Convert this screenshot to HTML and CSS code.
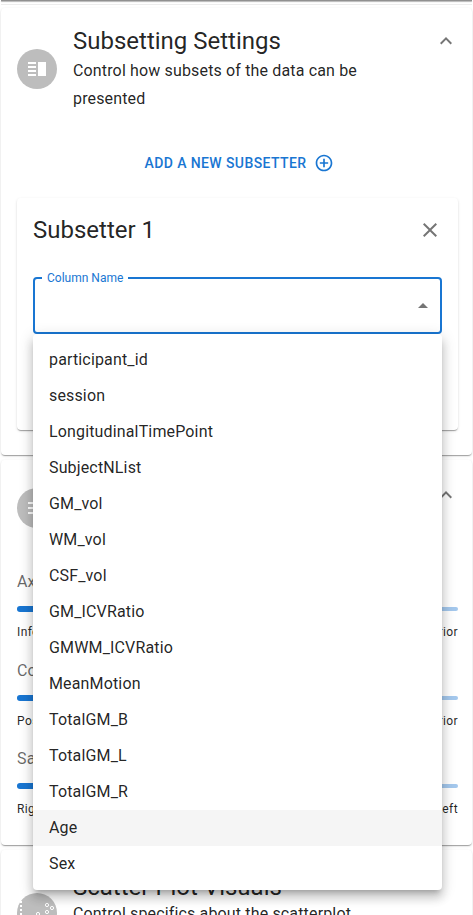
FILE: index.html
```html
<!DOCTYPE html>
<html lang="en">
<head>
<meta charset="utf-8">
<title>Settings</title>
<link rel="stylesheet" href="styles.css">
</head>
<body>
<div class="page">
  <div class="card stub"></div>

  <section class="card subsetting">
    <header class="card-head">
      <div class="avatar">
        <svg viewBox="0 0 24 24" class="avatar-icon"><path d="M3 5h8v2H3zM3 9h8v2H3zM3 13h8v2H3zM3 17h8v2H3zM13 5h8v14h-8z"/></svg>
      </div>
      <div class="head-text">
        <h2 class="title">Subsetting Settings</h2>
        <p class="sub">Control how subsets of the data can be presented</p>
      </div>
      <svg viewBox="0 0 24 24" class="chevron"><path d="M12 8l-6 6 1.41 1.41L12 10.83l4.59 4.58L18 14z"/></svg>
    </header>
    <div class="add-row">
      <span class="add-label">Add a new subsetter</span>
      <svg viewBox="0 0 24 24" class="add-icon"><path d="M13 7h-2v4H7v2h4v4h2v-4h4v-2h-4V7zm-1-5C6.48 2 2 6.48 2 12s4.48 10 10 10 10-4.48 10-10S17.52 2 12 2zm0 18c-4.41 0-8-3.59-8-8s3.59-8 8-8 8 3.59 8 8-3.59 8-8 8z"/></svg>
    </div>
    <div class="subsetter">
      <div class="subsetter-head">
        <h3 class="subsetter-title">Subsetter 1</h3>
        <svg viewBox="0 0 24 24" class="close"><path d="M19 6.41L17.59 5 12 10.59 6.41 5 5 6.41 10.59 12 5 17.59 6.41 19 12 13.41 17.59 19 19 17.59 13.41 12z"/></svg>
      </div>
      <div class="field">
        <span class="field-label">Column Name</span>
        <svg viewBox="0 0 24 24" class="caret"><path d="M7 14l5-5 5 5z"/></svg>
      </div>
    </div>
  </section>

  <section class="card planes">
    <header class="card-head">
      <div class="avatar">
        <svg viewBox="0 0 24 24" class="avatar-icon"><path d="M3 6h18v2H3zM3 11h18v2H3zM3 16h18v2H3z"/></svg>
      </div>
      <div class="head-text"></div>
      <svg viewBox="0 0 24 24" class="chevron"><path d="M12 8l-6 6 1.41 1.41L12 10.83l4.59 4.58L18 14z"/></svg>
    </header>
    <div class="slider-group">
      <div class="slider-name">Axial</div>
      <div class="slider"><div class="fill"></div></div>
      <div class="slider-ends"><span>Inferior</span><span>Superior</span></div>
    </div>
    <div class="slider-group">
      <div class="slider-name">Coronal</div>
      <div class="slider"><div class="fill"></div></div>
      <div class="slider-ends"><span>Posterior</span><span>Anterior</span></div>
    </div>
    <div class="slider-group">
      <div class="slider-name">Sagittal</div>
      <div class="slider"><div class="fill"></div></div>
      <div class="slider-ends"><span>Right</span><span>Left</span></div>
    </div>
  </section>

  <section class="card scatter">
    <header class="card-head">
      <div class="avatar">
        <svg viewBox="0 0 40 40" class="avatar-full"><path class="axis" d="M4 8v24"/><circle cx="30" cy="12" r="1.6"/><circle cx="35" cy="15" r="1.6"/><circle cx="30" cy="19" r="1.6"/><circle cx="21" cy="21" r="1.6"/><circle cx="27" cy="24" r="1.6"/><circle cx="15" cy="27" r="1.6"/></svg>
      </div>
      <div class="head-text">
        <h2 class="title">Scatter Plot Visuals</h2>
        <p class="sub">Control specifics about the scatterplot</p>
      </div>
    </header>
  </section>

  <ul class="menu">
    <li>participant_id</li>
    <li>session</li>
    <li>LongitudinalTimePoint</li>
    <li>SubjectNList</li>
    <li>GM_vol</li>
    <li>WM_vol</li>
    <li>CSF_vol</li>
    <li>GM_ICVRatio</li>
    <li>GMWM_ICVRatio</li>
    <li>MeanMotion</li>
    <li>TotalGM_B</li>
    <li>TotalGM_L</li>
    <li>TotalGM_R</li>
    <li class="hover">Age</li>
    <li>Sex</li>
  </ul>
</div>
</body>
</html>
```
FILE: styles.css
```css
* { box-sizing: border-box; }
html, body { margin: 0; padding: 0; height: 100%; overflow: hidden; }
body { background: #fff; font-family: Roboto, "Liberation Sans", sans-serif; color: rgba(0,0,0,0.87); }
.page { position: relative; width: 473px; height: 915px; overflow: hidden; padding: 0 1px; }
.card { position: relative; background: #fff; border-radius: 4px; box-shadow: 0 2px 1px -1px rgba(0,0,0,.2), 0 1px 1px 0 rgba(0,0,0,.14), 0 1px 3px 0 rgba(0,0,0,.12); margin-bottom: 5px; }
.stub { height: 1px; margin: 0 0 7px; background: #909090; border-radius: 0; box-shadow: 0 1px 1px #b0b0b0, 0 4px 0 #ededed; }
.subsetting { height: 447px; }
.planes { height: 385px; }
.scatter { height: 120px; margin-bottom: 0; }
.card-head { display: flex; align-items: center; padding: 17px 16px; height: 122px; gap: 16px; }
.avatar { width: 40px; height: 40px; border-radius: 50%; background: #bdbdbd; display: flex; align-items: center; justify-content: center; flex: none; }
.avatar-icon { width: 24px; height: 24px; fill: #fff; }
.avatar-full { width: 40px; height: 40px; fill: none; stroke: #fff; stroke-width: 1; }
.axis { stroke-dasharray: 2 2; stroke-width: 2; }
.head-text { flex: 1; min-width: 0; padding-right: 30px; }
.title { margin: 0; font-size: 24px; font-weight: 400; line-height: 32px; }
.sub { margin: 0; font-size: 16px; line-height: 28px; letter-spacing: .15px; }
.chevron { width: 24px; height: 24px; fill: rgba(0,0,0,.54); position: absolute; top: 21px; right: 14px; }
.add-row { display: flex; justify-content: center; align-items: center; gap: 8px; margin: 21px 0 0 6px; height: 24px; color: #1976d2; }
.add-label { font-size: 14px; font-weight: 500; letter-spacing: .4px; text-transform: uppercase; }
.add-icon { width: 20px; height: 20px; fill: #1976d2; }
.subsetter { margin: 23px 14px 0 16px; height: 232px; padding: 16px; border-radius: 4px; box-shadow: 0 2px 1px -1px rgba(0,0,0,.2), 0 1px 1px 0 rgba(0,0,0,.14), 0 1px 3px 0 rgba(0,0,0,.12); }
.subsetter-head { display: flex; justify-content: space-between; align-items: center; height: 32px; }
.subsetter-title { margin: 0; font-size: 24px; font-weight: 400; }
.close { width: 24px; height: 24px; fill: rgba(0,0,0,.54); }
.field { position: relative; height: 57px; margin-top: 31px; border: 2px solid #1976d2; border-radius: 4px; }
.field-label { position: absolute; left: 7px; top: -9px; padding: 0 5px; background: #fff; font-size: 12px; line-height: 16px; color: #1976d2; }
.caret { position: absolute; right: 5px; top: 15px; width: 24px; height: 24px; fill: rgba(0,0,0,.54); }
.planes .card-head { height: 96px; margin-bottom: 14px; }
.planes .chevron { top: 23px; }
.slider-group { padding: 0 14px 0 16px; height: 88.5px; }
.slider-name { font-size: 16px; line-height: 24px; letter-spacing: .15px; color: rgba(0,0,0,.6); }
.slider { height: 4px; margin-top: 13px; border-radius: 2px; background: #a4c8ed; position: relative; }
.fill { position: absolute; left: 0; top: -1px; height: 6px; width: 30%; border-radius: 3px; background: #1976d2; }
.slider-ends { display: flex; justify-content: space-between; font-size: 12px; letter-spacing: .4px; line-height: 20px; margin-top: 11px; }
.scatter .card-head { align-items: flex-start; padding-top: 21px; }
.scatter .avatar { margin-top: 22px; }
.scatter .sub { margin-top: -3px; }
.menu { position: absolute; left: 33px; top: 334px; width: 409px; height: 556px; margin: 0; padding: 8px 0; list-style: none; background: #fff; border-radius: 4px; box-shadow: 0 5px 5px -3px rgba(0,0,0,.2), 0 8px 10px 1px rgba(0,0,0,.14), 0 3px 14px 2px rgba(0,0,0,.12); }
.menu li { height: 36px; line-height: 36px; padding: 0 16px; font-size: 16px; letter-spacing: .15px; }
.menu li.hover { background: #f5f5f5; }
```
